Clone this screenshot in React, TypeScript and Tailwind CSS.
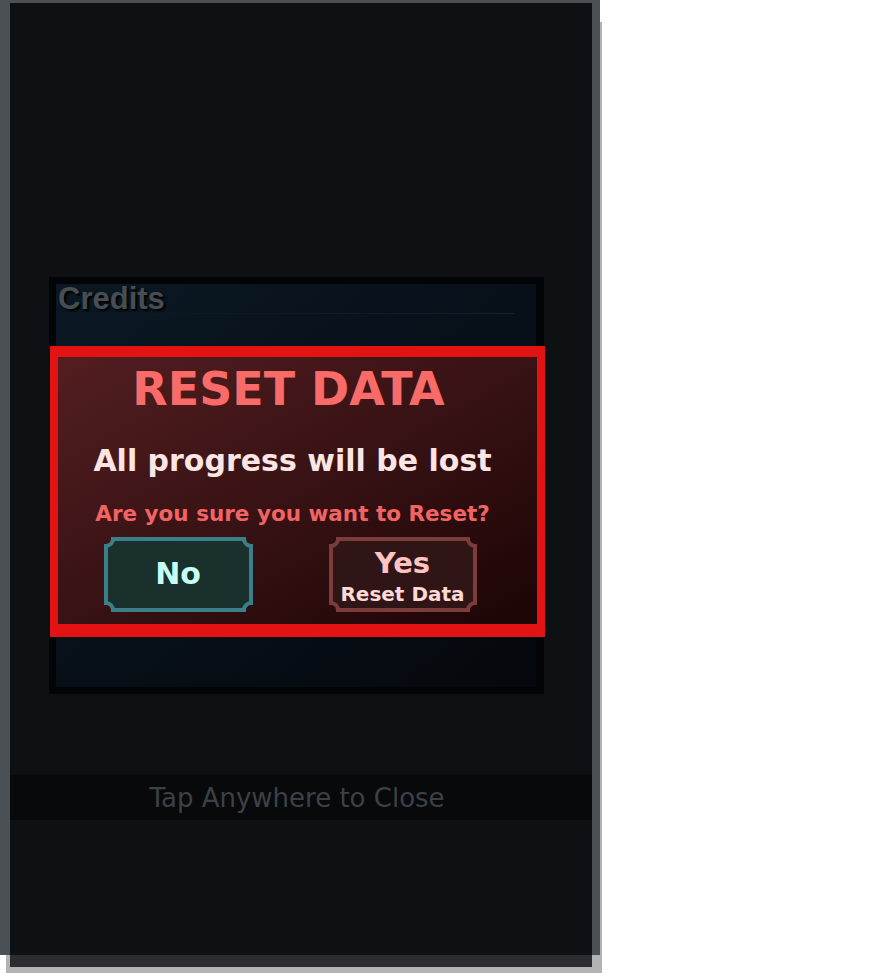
import React from 'react'

const gameFont = { fontFamily: '"DejaVu Sans", Verdana, sans-serif' }

function FrameButton({
  width,
  stroke,
  fill,
  children,
}: {
  width: number
  stroke: string
  fill: string
  children: React.ReactNode
}) {
  const h = 75
  const r = 7
  const w = width
  const d = `M${2 + r} 2 H${w - 2 - r} A${r} ${r} 0 0 0 ${w - 2} ${2 + r} V${h - 2 - r} A${r} ${r} 0 0 0 ${w - 2 - r} ${h - 2} H${2 + r} A${r} ${r} 0 0 0 2 ${h - 2 - r} V${2 + r} A${r} ${r} 0 0 0 ${2 + r} 2 Z`
  return (
    <div className="relative h-[75px] shrink-0" style={{ width }}>
      <svg className="absolute inset-0" width={w} height={h} viewBox={`0 0 ${w} ${h}`}>
        <path d={d} fill={fill} stroke={stroke} strokeWidth="4" />
      </svg>
      <div className="relative h-full flex flex-col items-center">{children}</div>
    </div>
  )
}

export default function App() {
  return (
    <div className="w-[880px] h-[976px] bg-white overflow-hidden" style={gameFont}>
      <div className="w-[600px] h-[955px] bg-[#4b5054] pt-[3px] pl-[10px] shadow-[4px_20px_0_-2px_#b3b3b3]">
        <div className="w-[582px] flex flex-col">
          <div className="h-[952px] bg-[#0e1114] flex flex-col">
            {/* credits panel, reset dialog sits over it */}
            <div className="relative mt-[274px] ml-[39px] w-[495px] h-[417px] bg-[#020405] p-[7px] pr-[8px]">
              <div className="h-full bg-gradient-to-br from-[#0b1823] via-[#071019] to-[#05080c] flex flex-col">
                <div
                  className="pl-[2px] text-[31px] leading-[30px] font-bold text-[#474d52] [text-shadow:2px_2px_2px_#000]"
                  style={{ fontFamily: '"Liberation Sans", Arial, sans-serif' }}
                >
                  Credits
                </div>
                <div className="mt-[-1px] ml-[20px] mr-[22px] h-px bg-gradient-to-r from-transparent to-[#13222d]" />
              </div>

              <div className="absolute left-[1px] top-[69px] w-[495px] h-[291px] border-[#e31313] border-x-[8px] border-t-[11px] border-b-[13px]">
                <div className="h-full bg-gradient-to-br from-[#531e20] via-[#381214] to-[#1c0505] flex flex-col items-center pr-[10px]">
                  <div className="mt-[8px] mr-[8px] text-[46px] leading-[48px] font-bold text-[#f86b69]">RESET DATA</div>
                  <div className="mt-[33px] text-[30px] leading-[30px] font-bold text-[#fbe6e4]">
                    All progress will be lost
                  </div>
                  <div className="mt-[26px] text-[21.5px] leading-[24px] font-bold text-[#f26463]">
                    Are you sure you want to Reset?
                  </div>
                  <div className="mt-[11px] mr-[5px] flex gap-[76px]">
                    <FrameButton width={149} stroke="#3b8088" fill="#1a302d">
                      <div className="mt-[22px] text-[30px] leading-[30px] font-bold text-[#c8fff3]">No</div>
                    </FrameButton>
                    <FrameButton width={148} stroke="#7b3c3b" fill="#2f1515">
                      <div className="mt-[12px] text-[29px] leading-[29px] font-bold text-[#ffc4c2]">Yes</div>
                      <div className="mt-[6px] text-[20px] leading-[20px] font-bold text-[#ffd9d6]">Reset Data</div>
                    </FrameButton>
                  </div>
                </div>
              </div>
            </div>

            <div className="mt-[81px] h-[45px] bg-[#07090b] flex items-center justify-center pr-[8px]">
              <span className="text-[26px] leading-[26px] text-[#3c4148]">Tap Anywhere to Close</span>
            </div>
          </div>
          <div className="h-[12px] bg-[#2a2e31]" />
        </div>
      </div>
    </div>
  )
}
